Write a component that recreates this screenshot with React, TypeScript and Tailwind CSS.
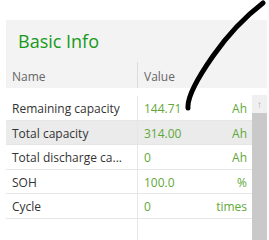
import React from 'react';

const rows = [
  { name: 'Remaining capacity', value: '144.71', unit: 'Ah' },
  { name: 'Total capacity', value: '314.00', unit: 'Ah', selected: true },
  { name: 'Total discharge ca...', value: '0', unit: 'Ah' },
  { name: 'SOH', value: '100.0', unit: '%' },
  { name: 'Cycle', value: '0', unit: 'times' },
  { name: '', value: '', unit: '' },
];

export default function App() {
  return (
    <div
      className="relative w-[269px] h-[240px] overflow-hidden bg-white pt-[20px] pl-[6px] pr-[2px]"
      style={{ fontFamily: '"Open Sans", "Noto Sans", sans-serif' }}
    >
      <div className="bg-[#f3f3f3]">
        <div className="h-[42px] flex items-center pl-[12px] text-[18px] text-[#17991a]">
          Basic Info
        </div>
        <div className="grid grid-cols-[131px_1fr] h-[26px] text-[12px] text-[#666666]">
          <div className="flex items-center pl-[6px] pt-[4px]">Name</div>
          <div className="flex items-center pl-[6px] pt-[4px] border-l border-[#dcdcdc]">Value</div>
        </div>
      </div>

      <div className="flex">
        <div className="flex-1 pt-[8px]">
          {rows.map((row, i) => (
            <div
              key={i}
              className={`grid grid-cols-[131px_1fr] h-[24.5px] border-b border-[#e6e6e6] text-[12px] ${row.selected ? 'bg-[#ebebeb]' : 'bg-white'}`}
            >
              <div className="flex items-center pl-[6px] pt-[3px] text-[#333333] whitespace-nowrap overflow-hidden">
                {row.name}
              </div>
              <div className="flex items-center justify-between pl-[6px] pr-[5px] pt-[3px] border-l border-[#e6e6e6] text-[#5fa83a]">
                <span>{row.value}</span>
                <span>{row.unit}</span>
              </div>
            </div>
          ))}
        </div>
        <div className="w-[15px] pt-[7px] flex flex-col">
          <div className="h-[18px] bg-[#f0f0f0] flex items-center justify-center text-[10px] text-[#a8a8a8]">
            ↑
          </div>
          <div className="flex-1 h-[140px] bg-[#c9c9c9]" />
        </div>
      </div>

      <svg className="absolute left-0 top-0 pointer-events-none" width="269" height="240">
        <path
          d="M188 108 C187 97, 199 76, 213 56 S246 16, 263 3"
          fill="none"
          stroke="#000"
          strokeWidth="5"
          strokeLinecap="round"
        />
      </svg>
    </div>
  );
}
